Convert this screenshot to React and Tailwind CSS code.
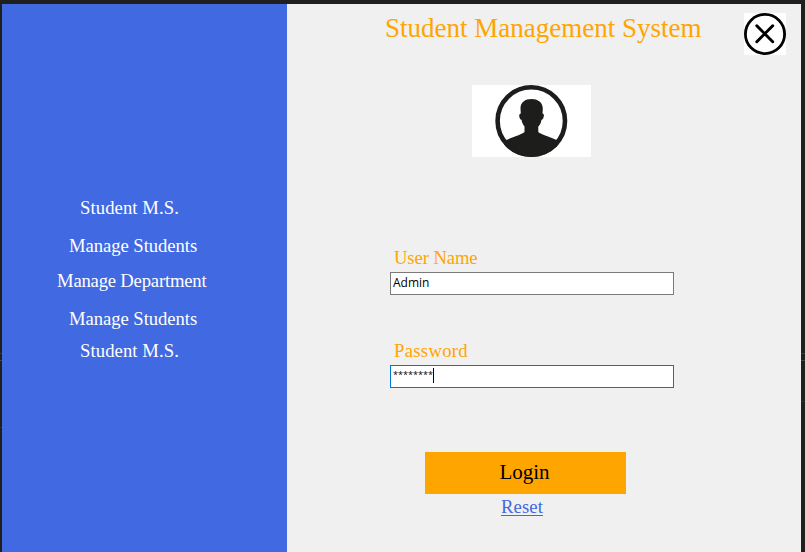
const links = [
  { label: "Student M.S.", place: "ml-[78px] tracking-[0.08px]" },
  { label: "Manage Students", place: "ml-[67px] mt-4 tracking-[-0.06px]" },
  { label: "Manage Department", place: "ml-[55px] mt-[13px] tracking-[-0.2px]" },
  { label: "Manage Students", place: "ml-[67px] mt-4 tracking-[-0.06px]" },
  { label: "Student M.S.", place: "ml-[78px] mt-2.5 tracking-[0.08px]" },
];

function Sidebar() {
  return (
    <nav className="w-[285px] shrink-0 bg-[#4169e1] pt-[193px] text-white">
      {links.map((link, i) => (
        <div key={i} className={`h-[22px] whitespace-nowrap text-[18.67px] leading-[22px] ${link.place}`}>
          {link.label}
        </div>
      ))}
    </nav>
  );
}

function CloseIcon() {
  return (
    <svg className="mt-[9px] ml-[42px] h-[42px] w-[42px] shrink-0 bg-white" viewBox="0 0 42 42" fill="none" stroke="#000">
      <circle cx="21" cy="21" r="19.6" strokeWidth="2.8" />
      <path d="M12.8 12.8 28.700 28.700M28.700 12.8 12.8 28.700" strokeWidth="3" strokeLinecap="round" />
    </svg>
  );
}

function Avatar() {
  return (
    <svg className="mt-[30px] ml-[185px] h-[72px] w-[119px] bg-white" viewBox="0 0 119 72">
      <defs>
        <clipPath id="disc">
          <circle cx="59.3" cy="36" r="36" />
        </clipPath>
      </defs>
      <g fill="#1d1d1b" clipPath="url(#disc)">
        <path d="M59.5 14C53 14 48.2 17.500 48.500 24L48.800 28.500C47 28.500 46.800 31.500 47.800 33.200C48.300 34.400 49 34.600 49.500 34.800C50 38 51.300 40 52.500 41.500L52.500 47C50 49.500 42 51.500 32 56L30 76H89L87 56C77 51.500 69 49.500 66.300 47L66.300 41.500C68 40 69 38 69.500 34.800C70.200 34.600 70.800 34.200 71.200 33.200C72.200 31.500 72.200 28.500 70.500 28.500L70.800 24C71 17.500 66 14 59.5 14Z" />
      </g>
      <circle cx="59.3" cy="36" r="33.700" fill="none" stroke="#1d1d1b" strokeWidth="4.600" />
    </svg>
  );
}

function WindowEdge({ className, last }) {
  return (
    <div className={`flex flex-col bg-[#1f1f1f] ${className}`}>
      <div className="h-[349px] bg-[#1f1f1f]" />
      <div className="h-px bg-[#3c3c3c]" />
      <div className="h-1.5" />
      <div className="h-px bg-[#464646]" />
      <div className={last} />
      <div className="h-px bg-[#303030]" />
    </div>
  );
}

export default function App() {
  return (
    <div className="flex h-[552px] w-[805px] overflow-hidden bg-[#1f1f1f] pt-1 font-['Liberation_Serif','Times_New_Roman',serif]">
      <WindowEdge className="w-0.5" last="h-[66px]" />
      <Sidebar />
      <main className="w-[514px] shrink-0 bg-[#f0f0f0] text-[#ffa500]">
        <header className="flex h-[51px]">
          <h1 className="mt-2 ml-[98px] w-[317px] whitespace-nowrap text-[27px] leading-8">
            Student Management System
          </h1>
          <CloseIcon />
        </header>
        <Avatar />
        <form className="ml-[103px] w-[284px]">
          <label htmlFor="user" className="mt-[90px] ml-1 block h-[25px] text-[18.67px] leading-[22px] tracking-[-0.1px]">
            User Name
          </label>
          <div className="flex h-[23px] border border-[#7a7a7a] bg-white pl-0.5 text-black">
            <input
              id="user"
              type="text"
              defaultValue="Admin"
              className="-mt-px h-[21px] w-full bg-transparent font-['Open_Sans',sans-serif] text-[12px] outline-none"
            />
          </div>
          <label htmlFor="password" className="mt-[45px] ml-1 block h-[25px] text-[18.67px] leading-[22px] tracking-[0.3px]">
            Password
          </label>
          <div className="flex h-[23px] border border-[#0078d7] bg-white pl-0.5 text-black">
            <span className="w-10 font-['Open_Sans',sans-serif] text-[9.1px] leading-[18px]">********</span>
            <span className="mt-0.5 h-[15px] w-px bg-black" />
          </div>
          <button type="button" className="mt-16 ml-[35px] block h-[42px] w-[201px] bg-[#ffa500] pr-0.5 pb-0.5 text-[21px] leading-[40px] text-black">
            Login
          </button>
          <a className="mt-[3px] ml-[111px] block h-[19px] w-[42px] border-b border-[#4169e1] text-[18.67px] leading-5 text-[#4169e1] tracking-[0.1px]">
            Reset
          </a>
        </form>
      </main>
      <WindowEdge className="w-1" last="h-10" />
    </div>
  );
}
